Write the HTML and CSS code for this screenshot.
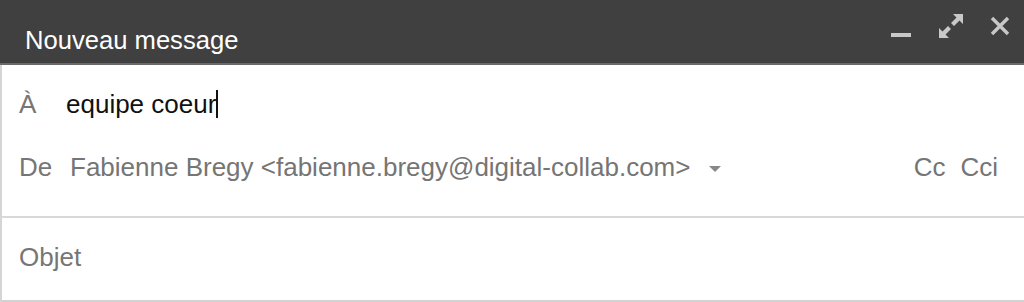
FILE: index.html
```html
<!DOCTYPE html>
<html lang="fr">
<head>
<meta charset="utf-8">
<link rel="stylesheet" href="styles.css">
</head>
<body>
<div class="compose">
  <header class="titlebar">
    <span class="title">Nouveau message</span>
    <div class="actions">
      <svg class="icon" width="22" height="24" viewBox="0 0 22 24"><rect x="1" y="19" width="20" height="4" fill="#c8c8c8"/></svg>
      <svg class="icon" width="26" height="26" viewBox="0 0 26 26" fill="#c8c8c8"><path d="M15 1 H25 V11 L21.5 7.5 L16 13 L13 10 L18.5 4.5 Z"/><path d="M11 25 H1 V15 L4.5 18.5 L10 13 L13 16 L7.5 21.5 Z"/></svg>
      <svg class="icon" width="20" height="20" viewBox="0 0 20 20"><path d="M2 2 L18 18 M18 2 L2 18" stroke="#c8c8c8" stroke-width="3.4"/></svg>
    </div>
  </header>
  <div class="fields">
    <div class="row to">
      <span class="label">À</span>
      <span class="value">equipe coeur<span class="caret"></span></span>
    </div>
    <div class="row from">
      <span class="label">De</span>
      <span class="sender">Fabienne Bregy &lt;fabienne.bregy@digital-collab.com&gt;</span>
      <svg class="dropdown" width="12" height="7" viewBox="0 0 12 7"><path d="M0 0 H12 L6 6 Z" fill="#888"/></svg>
      <span class="links"><span>Cc</span><span>Cci</span></span>
    </div>
  </div>
  <div class="subject">
    <span class="label">Objet</span>
  </div>
</div>
</body>
</html>
```
FILE: styles.css
```css
html, body {
  margin: 0;
  padding: 0;
  background: #fff;
}
body {
  font-family: "Liberation Sans", Arial, sans-serif;
  width: 1024px;
  height: 302px;
  overflow: hidden;
}
.compose {
  display: flex;
  flex-direction: column;
  height: 302px;
}
.titlebar {
  height: 63px;
  background: #404040;
  border-bottom: 2px solid #6a6a6a;
  display: flex;
  align-items: flex-end;
  justify-content: space-between;
  padding: 0 14px 0 25px;
  box-sizing: content-box;
}
.title {
  color: #fff;
  font-size: 25.6px;
  line-height: 26px;
  padding-bottom: 10px;
}
.actions {
  align-self: flex-start;
  display: flex;
  align-items: center;
  gap: 26px;
  padding-top: 13px;
}
.icon { display: block; }
.fields {
  border-left: 2px solid #d5d5d5;
  border-bottom: 2px solid #d8d8d8;
  height: 153px;
  box-sizing: border-box;
  padding-top: 19px;
}
.row {
  display: flex;
  align-items: center;
  font-size: 26px;
  line-height: 40px;
}
.label {
  color: #767676;
}
.to .label { padding-left: 17px; width: 47px; }
.to .value { color: #111; display: flex; align-items: center; }
.caret {
  display: inline-block;
  width: 2px;
  height: 28px;
  background: #111;
}
.from { margin-top: 23px; }
.from .label { padding-left: 17px; width: 51px; }
.sender { color: #757575; }
.dropdown { margin-left: 19px; margin-top: 5px; }
.links {
  margin-left: auto;
  display: flex;
  gap: 15px;
  padding-right: 26px;
  color: #757575;
}
.subject {
  flex: 1;
  border-left: 2px solid #d5d5d5;
  border-bottom: 2px solid #d2d2d2;
  padding-left: 17px;
  padding-bottom: 4px;
  display: flex;
  align-items: center;
  font-size: 26px;
}
```
